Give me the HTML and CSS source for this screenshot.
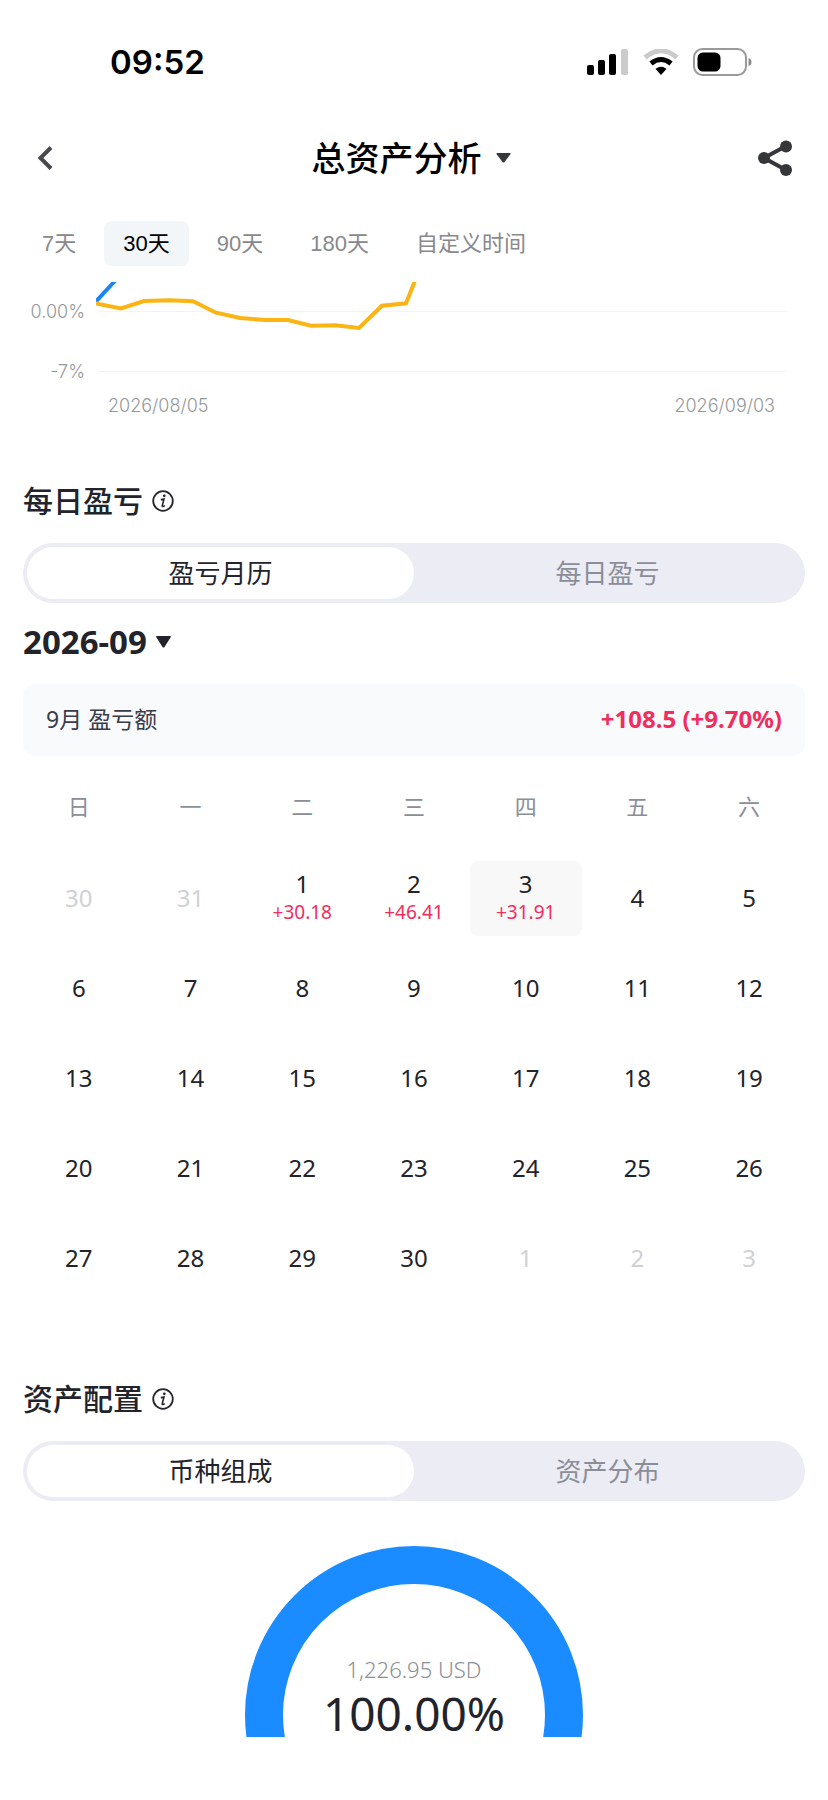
FILE: index.html
```html
<!DOCTYPE html>
<html lang="zh-CN">

<head>
    <meta charset="UTF-8">
    <meta name="viewport" content="width=device-width, initial-scale=1.0">
    <title>总资产分析</title>
    <link rel="stylesheet" href="styles.css">
</head>

<body>

    <div class="status-bar">
        <span class="time">09:52</span>
        <div class="status-icons">
            <svg width="42" height="26" viewBox="0 0 42 26">
                <rect x="0" y="16" width="7" height="10" rx="2"/>
                <rect x="11" y="11" width="7" height="15" rx="2"/>
                <rect x="22" y="5" width="7" height="21" rx="2"/>
                <rect x="34" y="0" width="7" height="26" rx="2" fill="#cbcbcb"/>
            </svg>
            <svg width="36" height="26" viewBox="0 0 36 26">
                <path d="M2 8.500Q18 -5 34 8.500" fill="none" stroke="#cbcbcb" stroke-width="5"/>
                <path d="M8 14.500Q18 6.500 28 14.500" fill="none" stroke="#000" stroke-width="5"/>
                <path d="M12.500 20Q18 15.500 23.500 20L18 26z"/>
            </svg>
            <svg width="59" height="28" viewBox="0 0 59 28">
                <rect x="1" y="1" width="52" height="26" rx="8.500" fill="none" stroke="#9a9a9a" stroke-width="2"/>
                <rect x="4.500" y="4.500" width="23" height="19" rx="5.500"/>
                <path d="M55.500 10Q58.500 11 58.500 14T55.500 18z" fill="#8c8c8c"/>
            </svg>
        </div>
    </div>

    <header class="header">
        <button class="icon-btn" aria-label="返回">
            <svg width="17" height="26" viewBox="0 0 17 26">
                <path d="M14 2.500L3.500 13L14 23.500" fill="none" stroke="#48494e" stroke-width="4"/>
            </svg>
        </button>
        <h1>
            <button class="title-btn">
                总资产分析
                <svg width="15" height="10" viewBox="0 0 15 10"><path d="M1 0H14Q15 0 14.500 1L8.500 9Q7.500 10 6.500 9L.5 1Q0 0 1 0z" fill="#36373b"/></svg>
            </button>
        </h1>
        <button class="icon-btn share-btn" aria-label="分享">
            <svg width="36" height="36" viewBox="0 0 36 36" fill="#36373b">
                <path d="M29 6L7 18L29 30" fill="none" stroke="#36373b" stroke-width="4"/>
                <circle cx="7" cy="18" r="6"/>
                <circle cx="29" cy="6.500" r="6"/>
                <circle cx="29" cy="30" r="6"/>
            </svg>
        </button>
    </header>

    <main>
        <nav class="range-tabs">
            <button>7天</button>
            <button class="active">30天</button>
            <button>90天</button>
            <button>180天</button>
            <button>自定义时间</button>
        </nav>

        <div class="chart">
            <div class="y-axis">
                <span>0.00%</span>
                <span>-7%</span>
            </div>
            <svg class="plot" viewBox="0 0 691 92" preserveAspectRatio="none">
                <path class="grid-line" d="M2 29.500H691M2 89.500H691"/>
                <path class="line-blue" d="M0 19.500L18 0L24 -7"/>
                <path class="line-yellow" d="M0 21.500L25 26.500L48 19L74 18.300L97 19.300L120 30.700L144 36L169 38L192 38L215 43.700L239 43.300L263 46L286 23.700L310 21.300L318.500 0L322 -8"/>
            </svg>
            <div class="x-axis">
                <span>2026/08/05</span>
                <span>2026/09/03</span>
            </div>
        </div>

        <h2 class="section-title">
            每日盈亏
            <svg width="22" height="22" viewBox="0 0 22 22">
                <circle cx="11" cy="11" r="9.800" fill="none" stroke="#26272e" stroke-width="1.800"/>
                <circle cx="12.300" cy="5.800" r="1.400" fill="#26272e"/>
                <path d="M8.800 9.600L12 9L10.200 15.800Q10.200 17.200 12.800 15.600" fill="none" stroke="#26272e" stroke-width="1.600"/>
            </svg>
        </h2>
        <div class="segment">
            <button class="active">盈亏月历</button>
            <button>每日盈亏</button>
        </div>

        <button class="month-btn">
            2026-09
            <svg width="15" height="12" viewBox="0 0 15 12"><path d="M1 0H14Q15.500 0 14.500 1.500L8.500 11Q7.500 12 6.500 11L.5 1.500Q-.5 0 1 0z" fill="#22232b"/></svg>
        </button>

        <div class="month-summary">
            <span>9月 盈亏额</span>
            <strong>+108.5 (+9.70%)</strong>
        </div>

        <table class="calendar">
            <thead>
                <tr><th>日</th><th>一</th><th>二</th><th>三</th><th>四</th><th>五</th><th>六</th></tr>
            </thead>
            <tbody>
                <tr>
                    <td class="other">30</td>
                    <td class="other">31</td>
                    <td><div class="day">1<span>+30.18</span></div></td>
                    <td><div class="day">2<span>+46.41</span></div></td>
                    <td><div class="day today">3<span>+31.91</span></div></td>
                    <td>4</td>
                    <td>5</td>
                </tr>
                <tr><td>6</td><td>7</td><td>8</td><td>9</td><td>10</td><td>11</td><td>12</td></tr>
                <tr><td>13</td><td>14</td><td>15</td><td>16</td><td>17</td><td>18</td><td>19</td></tr>
                <tr><td>20</td><td>21</td><td>22</td><td>23</td><td>24</td><td>25</td><td>26</td></tr>
                <tr><td>27</td><td>28</td><td>29</td><td>30</td><td class="other">1</td><td class="other">2</td><td class="other">3</td></tr>
            </tbody>
        </table>

        <h2 class="section-title allocation-title">
            资产配置
            <svg width="22" height="22" viewBox="0 0 22 22">
                <circle cx="11" cy="11" r="9.800" fill="none" stroke="#26272e" stroke-width="1.800"/>
                <circle cx="12.300" cy="5.800" r="1.400" fill="#26272e"/>
                <path d="M8.800 9.600L12 9L10.200 15.800Q10.200 17.200 12.800 15.600" fill="none" stroke="#26272e" stroke-width="1.600"/>
            </svg>
        </h2>
        <div class="segment">
            <button class="active">币种组成</button>
            <button>资产分布</button>
        </div>

        <div class="donut">
            <svg width="338" height="191" viewBox="0 0 338 191">
                <circle cx="169" cy="169" r="150" fill="none" stroke="#1a8cff" stroke-width="38"/>
            </svg>
            <div class="donut-label">
                <span class="donut-amount">1,226.95 USD</span>
                <span class="donut-percent">100.00%</span>
            </div>
        </div>
    </main>

</body>

</html>
```
FILE: styles.css
```css
body {
    margin: 0;
    background-color: #fff;
    color: #22232b;
    font-family: "Noto Sans", "Noto Sans CJK SC", sans-serif;
}

button {
    margin: 0;
    padding: 0;
    border: none;
    background: none;
    color: inherit;
    font: inherit;
    cursor: pointer;
}

svg {
    display: block;
    overflow: hidden;
}

/* status bar */
.status-bar {
    display: flex;
    justify-content: space-between;
    align-items: center;
    height: 84px;
    padding: 20px 76px 0 110px;
    color: #000;
}

.time {
    font-family: Inter, sans-serif;
    font-size: 33px;
    font-weight: 600;
    line-height: 40px;
}

.status-icons {
    display: flex;
    align-items: center;
    gap: 14px;
}

/* header */
.header {
    display: flex;
    justify-content: space-between;
    align-items: center;
    height: 108px;
    padding: 0 35px 0 37px;
}

.icon-btn {
    width: 28px;
}

.share-btn {
    width: 36px;
}

.header h1 {
    margin: 0;
    font-size: 34px;
    font-weight: 500;
    line-height: 48px;
    color: #000;
}

.title-btn {
    display: flex;
    align-items: center;
    gap: 14px;
}

main {
    padding: 0 23px;
}

/* time range */
.range-tabs {
    display: flex;
    gap: 9px;
    margin-top: 9px;
}

.range-tabs button {
    height: 45px;
    padding: 0 19px;
    border-radius: 8px;
    font-family: "Liberation Sans", "Noto Sans CJK SC", sans-serif;
    font-size: 22px;
    line-height: 45px;
    color: #88898c;
}

.range-tabs .active {
    background-color: #f3f6f8;
    color: #000;
}

/* yield chart */
.chart {
    display: grid;
    grid-template-columns: 62px 1fr;
    column-gap: 11px;
    margin: 16px 18px 0 0;
    font-family: Inter, sans-serif;
    font-size: 18px;
    font-weight: 300;
    line-height: 30px;
    color: #96979b;
}

.y-axis {
    display: flex;
    flex-direction: column;
    gap: 30px;
    text-align: right;
    padding-top: 15px;
}

.plot {
    width: 100%;
    height: 92px;
}

.plot path {
    fill: none;
    vector-effect: non-scaling-stroke;
}

.grid-line {
    stroke: #f4f4f5;
    stroke-width: 1;
}

.line-blue {
    stroke: #1a86f5;
    stroke-width: 4;
}

.line-yellow {
    stroke: #fab414;
    stroke-width: 4;
}

.x-axis {
    grid-column: 2;
    display: flex;
    justify-content: space-between;
    padding: 4px 12px 0;
}

/* sections */
.section-title {
    display: flex;
    align-items: center;
    gap: 9px;
    margin: 60px 0 22px;
    font-size: 30px;
    font-weight: 500;
    line-height: 40px;
}

.allocation-title {
    margin-top: 76px;
}

.segment {
    display: grid;
    grid-template-columns: 1fr 1fr;
    height: 52px;
    padding: 4px;
    border-radius: 30px;
    background-color: #ebecf4;
}

.segment button {
    border-radius: 26px;
    font-size: 26px;
    line-height: 52px;
    color: #8b8e99;
}

.segment .active {
    background-color: #fff;
    color: #22232b;
}

.month-btn {
    display: flex;
    align-items: center;
    gap: 9px;
    margin: 19px 0 22px;
    font-size: 33px;
    font-weight: 700;
    line-height: 40px;
}

.month-summary {
    display: flex;
    justify-content: space-between;
    align-items: center;
    height: 68px;
    padding: 0 23px 4px;
    border-radius: 12px;
    background-color: #f8fafc;
    font-size: 23px;
    color: #3a3c4a;
}

.month-summary strong {
    font-size: 24px;
    font-weight: 700;
    color: #f02d5c;
}

/* calendar */
.calendar {
    width: 100%;
    margin-top: 7px;
    border-collapse: collapse;
    table-layout: fixed;
}

.calendar th,
.calendar td {
    height: 90px;
    padding: 0;
    text-align: center;
    font-size: 24px;
    font-weight: 400;
    line-height: 28px;
}

.calendar th {
    height: 86px;
    padding-bottom: 4px;
    font-size: 22px;
    color: #8b8e99;
}

.calendar .other {
    color: #d0d1d5;
}

.day {
    display: flex;
    flex-direction: column;
    justify-content: center;
    height: 75px;
    border-radius: 8px;
}

.day span {
    font-size: 19px;
    color: #f02d5c;
}

.today {
    background-color: #f8f8f8;
}

/* donut */
.donut {
    display: grid;
    justify-items: center;
    margin-top: 45px;
}

.donut > * {
    grid-area: 1 / 1;
}

.donut-label {
    display: flex;
    flex-direction: column;
    align-self: end;
    align-items: center;
}

.donut-amount {
    font-size: 22px;
    font-weight: 300;
    line-height: 40px;
    color: #8b8e94;
}

.donut-percent {
    font-size: 46px;
    font-weight: 400;
    line-height: 48px;
}
```
